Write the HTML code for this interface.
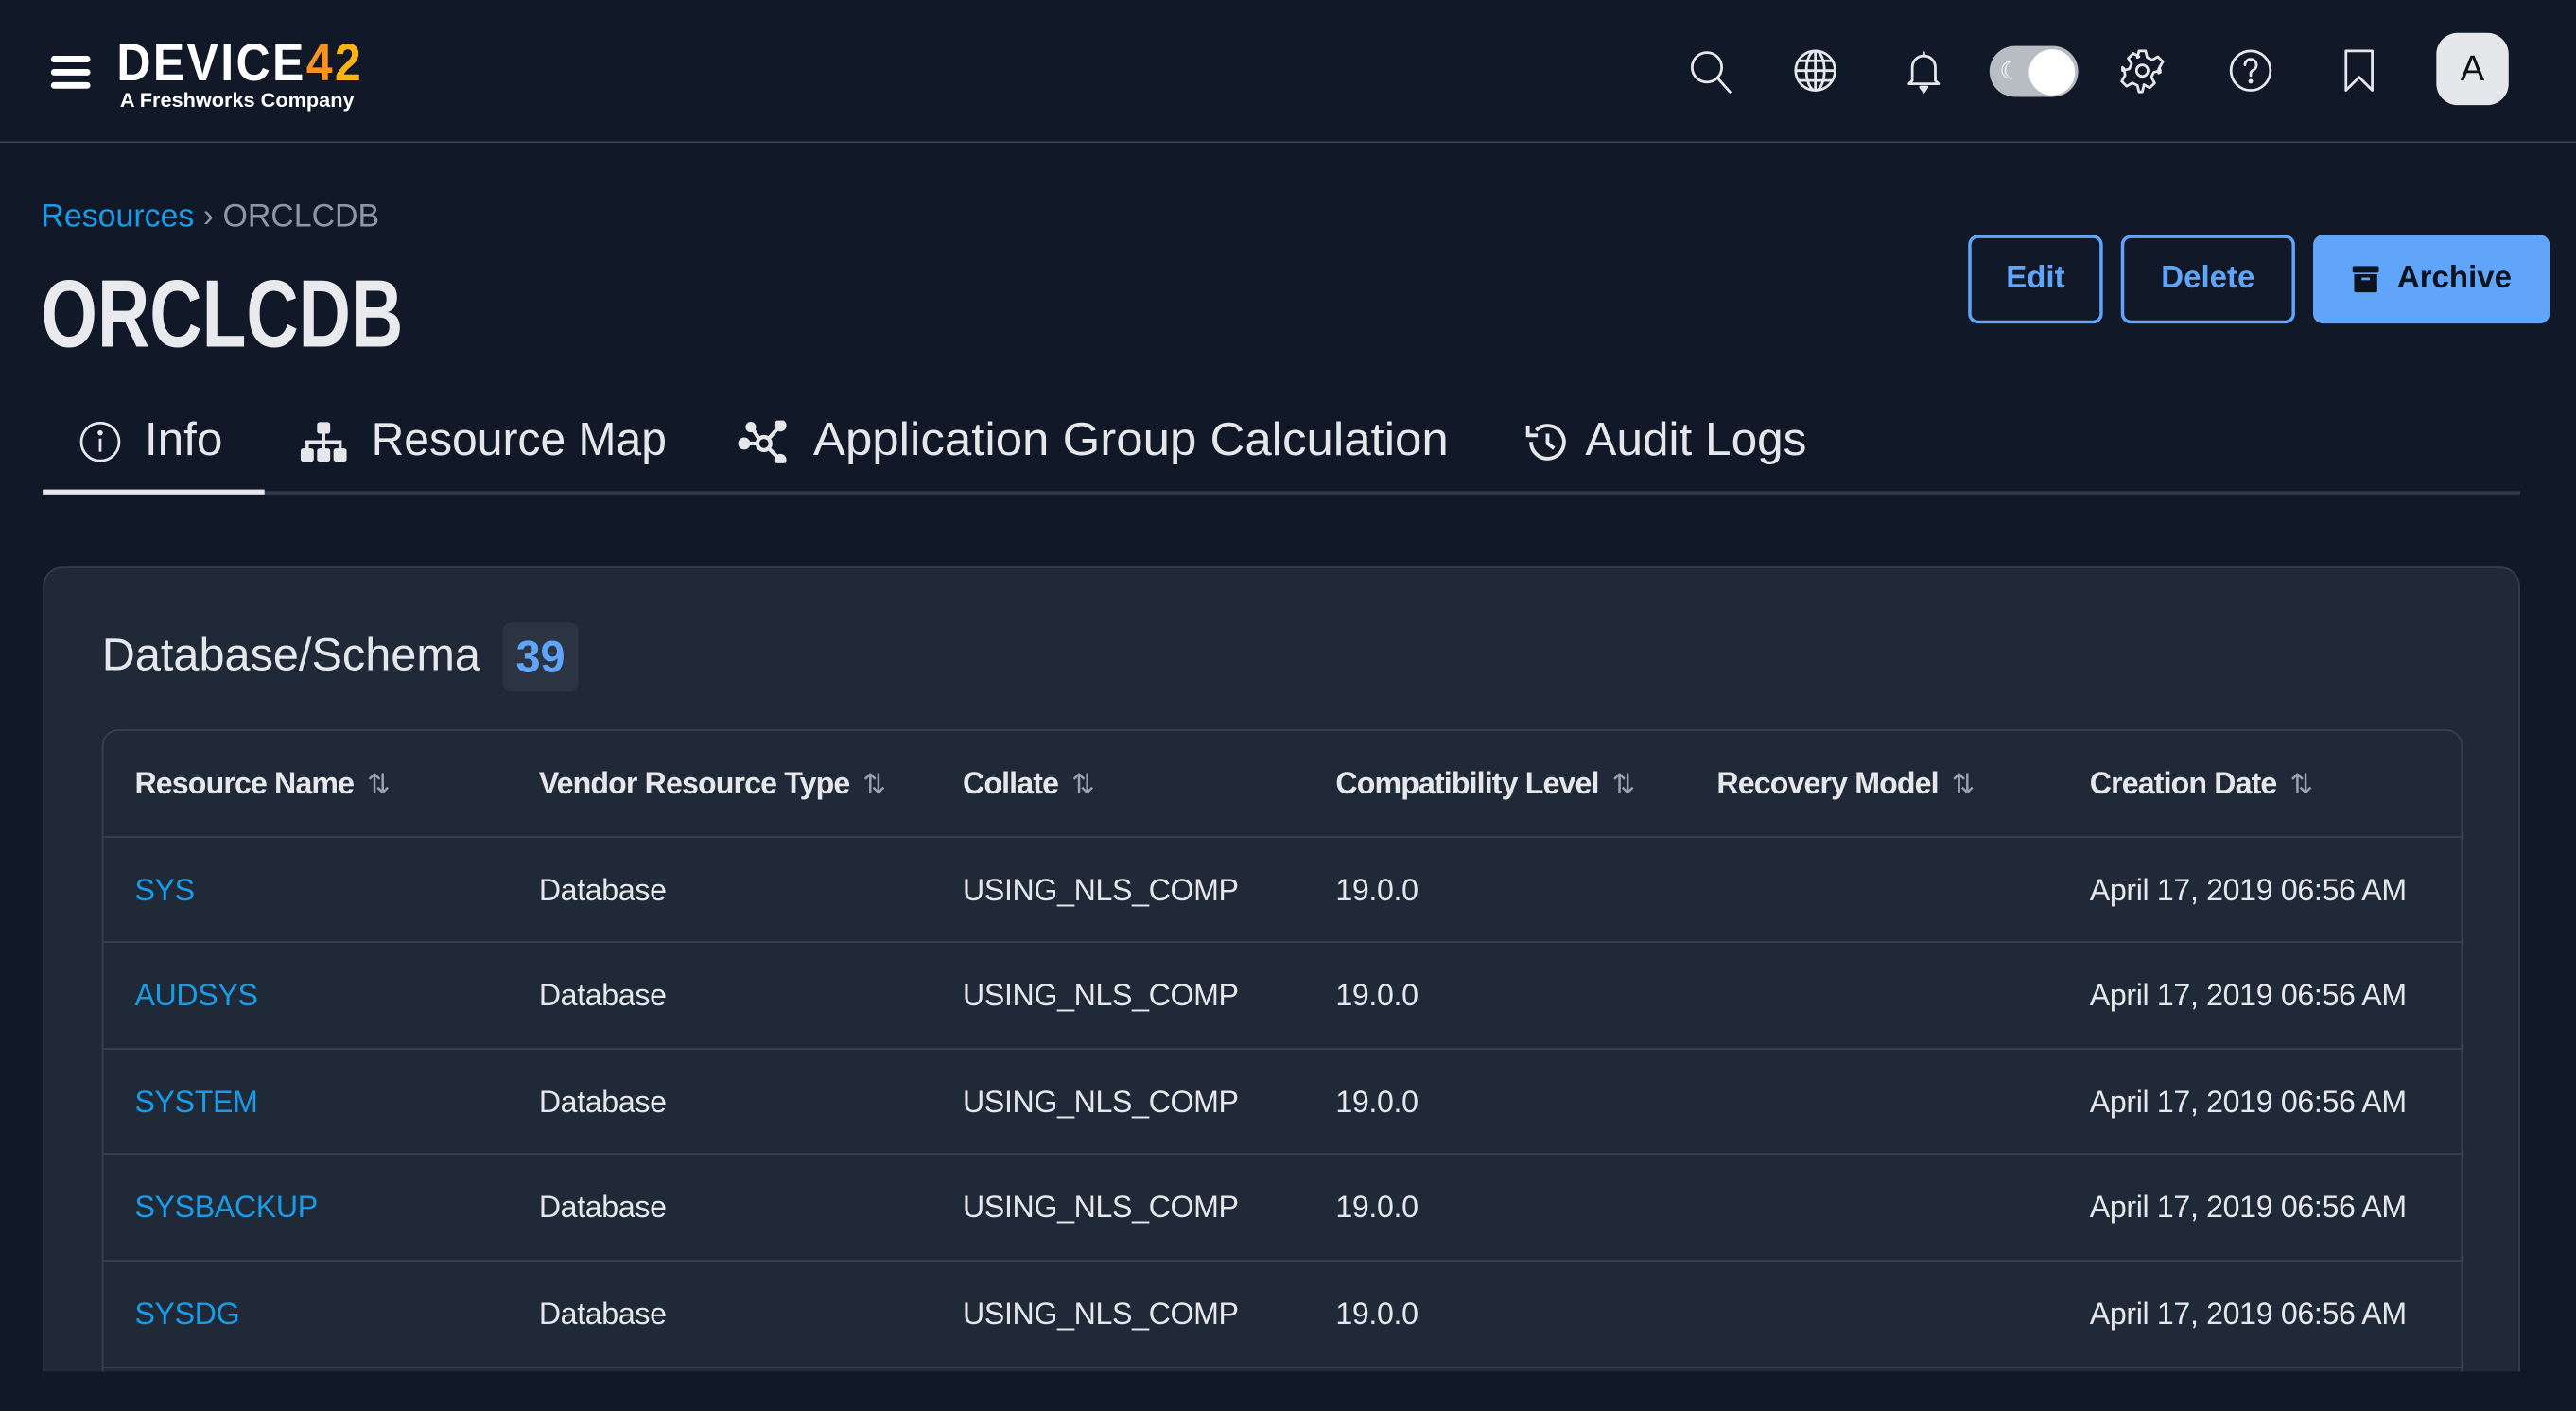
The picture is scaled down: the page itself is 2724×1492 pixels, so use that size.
<!DOCTYPE html>
<html><head><meta charset="utf-8"><style>
*{margin:0;padding:0;box-sizing:border-box}
html,body{width:2724px;height:1492px;overflow:hidden;background:#111827}
#w{position:absolute;left:0;top:0;width:1568px;height:859px;overflow:hidden;transform:scale(1.73724,1.73690);transform-origin:0 0;font-family:"Liberation Sans",sans-serif;color:#e5e7eb}
.a{position:absolute}
.hdr{left:0;top:0;width:1568px;height:87px;border-bottom:1px solid #3a4150}
.bar{position:absolute;left:31px;width:24px;height:3.5px;background:#fff;border-radius:2px}
.ic{position:absolute;top:29px;width:28px;height:28px}
.ic svg{width:28px;height:28px;fill:none;stroke:#e5e7eb;stroke-width:1.6;stroke-linecap:round;stroke-linejoin:round}
.btn{position:absolute;top:143px;height:54px;border:2px solid #60a5fa;border-radius:6px;color:#60a5fa;font-size:19px;font-weight:bold;display:flex;align-items:center;justify-content:center}
.tab{position:absolute;top:252px;font-size:28.5px;white-space:nowrap;display:flex;align-items:center;gap:14px}
.tab svg{fill:none;stroke:#e5e7eb;stroke-width:2}
.card{left:26px;top:345px;width:1508px;height:520px;background:#1f2937;border:1px solid #343d4b;border-radius:12px}
.tbl{left:62px;top:444px;width:1437px;height:420px;border:1px solid #374151;border-radius:10px;overflow:hidden}
.row{position:absolute;left:0;width:1437px;height:65px;border-top:1px solid #3a4352;font-size:18.5px}
.row span{position:absolute;top:50%;transform:translateY(-50%);white-space:nowrap;letter-spacing:-0.2px}
.hd span{font-weight:bold;letter-spacing:-0.5px}
.srt{color:#9ca3af;font-weight:normal;margin-left:8px;font-size:17px;font-style:normal}
.nm{color:#1a9be6}
</style></head><body><div id="w">
<div class="a hdr"></div>
<div class="bar" style="top:34px"></div><div class="bar" style="top:42px"></div><div class="bar" style="top:50px"></div>
<div class="a" style="left:71px;top:20px;font-size:32px;font-weight:bold;letter-spacing:1.5px;color:#fff;transform:scaleX(0.9);transform-origin:0 0">DEVICE<span style="color:#f7931e">4</span><span style="color:#fbb415">2</span></div>
<div class="a" style="left:73px;top:54px;font-size:12.5px;font-weight:bold;color:#fff">A Freshworks Company</div>

<div class="ic" style="left:1027px"><svg viewBox="0 0 28 28"><circle cx="12" cy="12" r="9"/><path d="M18.5 18.5L26 27"/></svg></div>
<div class="ic" style="left:1091px"><svg viewBox="0 0 28 28"><circle cx="14" cy="14" r="12"/><ellipse cx="14" cy="14" rx="5.5" ry="12"/><path d="M2 14h24M4 8h20M4 20h20M14 2v24"/></svg></div>
<div class="ic" style="left:1157px"><svg viewBox="0 0 28 28"><path d="M7 20V12a7 7 0 0 1 14 0v8l2 2H5z" /><path d="M14 3v2M12 24h4l-2 3z" fill="#e5e7eb"/></svg></div>
<div class="a" style="left:1211px;top:28px;width:54px;height:31px;border-radius:16px;background:#b8bcc3"></div>
<div class="a" style="left:1235px;top:30px;width:28px;height:28px;border-radius:50%;background:#fff"></div>
<div class="a" style="left:1217px;top:34px;font-size:15px;color:#fff">☾</div>
<div class="ic" style="left:1290px"><svg viewBox="0 0 28 28"><circle cx="14" cy="14" r="3.5"/><path d="M12 2h4l1 4 3 1.5 3.5-2 3 3-2 3.5L25 15l-1 .5v-2.5l1 1-4 1-1.5 3 2 3.5-3 3-3.5-2L15 23l-1 4h-2l-1-4-3-1.5-3.5 2-3-3 2-3.5L3 13l-1-1v2l4-1 1.5-3-2-3.5 3-3 3.5 2L11 6z"/></svg></div>
<div class="ic" style="left:1356px"><svg viewBox="0 0 28 28"><circle cx="14" cy="14" r="12"/><path d="M10.5 10.5a3.5 3.5 0 1 1 5 3.2c-1 .5-1.5 1.3-1.5 2.3v1"/><circle cx="14" cy="20.5" r=".6" fill="#e5e7eb"/></svg></div>
<div class="ic" style="left:1422px"><svg viewBox="0 0 28 28"><path d="M6 2h16v24l-8-8-8 8z"/></svg></div>
<div class="a" style="left:1483px;top:20px;width:44px;height:44px;border-radius:13px;background:#e5e7eb;color:#111;font-size:22px;display:flex;align-items:center;justify-content:center">A</div>

<div class="a" style="left:25px;top:121px;font-size:19.5px;color:#8b98a5"><span style="color:#1a9be6">Resources</span> › ORCLCDB</div>
<div class="a" style="left:25px;top:158px;font-size:58px;font-weight:bold;color:#e9eaee;transform:scaleX(0.76);transform-origin:0 0">ORCLCDB</div>

<div class="btn" style="left:1198px;width:82px">Edit</div>
<div class="btn" style="left:1291px;width:106px">Delete</div>
<div class="btn" style="left:1408px;width:144px;background:#60a5fa;color:#0b1220;gap:10px"><svg width="18" height="18" viewBox="0 0 18 18"><rect x="1" y="1" width="16" height="4" rx="1" fill="#0b1220"/><path d="M2 6h14v10a1 1 0 0 1-1 1H3a1 1 0 0 1-1-1z" fill="#0b1220"/><rect x="6.5" y="8" width="5" height="1.6" fill="#60a5fa"/></svg>Archive</div>

<div class="tab" style="left:48px"><svg width="26" height="26" viewBox="0 0 26 26" style="stroke-width:1.6"><circle cx="13" cy="13" r="11.5"/><path d="M13 11v8"/><circle cx="13" cy="7.5" r=".8" fill="#e5e7eb"/></svg><span>Info</span></div>
<div class="tab" style="left:182px"><svg width="30" height="26" viewBox="0 0 30 26" style="stroke:none;fill:#e5e7eb"><rect x="11" y="1" width="8" height="7" rx="1.5"/><rect x="14" y="8" width="2" height="5"/><rect x="4" y="12" width="22" height="2"/><rect x="4" y="12" width="2" height="6"/><rect x="14" y="12" width="2" height="6"/><rect x="24" y="12" width="2" height="6"/><rect x="1" y="17" width="8" height="8" rx="1.5"/><rect x="11" y="17" width="8" height="8" rx="1.5"/><rect x="21" y="17" width="8" height="8" rx="1.5"/></svg><span style="display:inline-block;transform:scaleX(.97);transform-origin:0 50%">Resource Map</span></div>
<div class="tab" style="left:449px"><svg width="32" height="26" viewBox="0 0 32 26" style="stroke-width:2.4"><circle cx="16" cy="14" r="4"/><path d="M5 14h7M19 11l6-7M19 17l6 6M13 11l-4-6"/><circle cx="4" cy="14" r="2.5" fill="#e5e7eb"/><circle cx="26" cy="3" r="2.5" fill="#e5e7eb"/><circle cx="26" cy="24" r="2.5" fill="#e5e7eb"/><circle cx="8" cy="4" r="2" fill="#e5e7eb"/></svg><span style="display:inline-block;transform:scaleX(1.03);transform-origin:0 50%">Application Group Calculation</span></div>
<div class="tab" style="left:927px;gap:10px"><svg width="28" height="26" viewBox="0 0 28 26" style="stroke-width:2.2"><path d="M5 13a10 10 0 1 0 3-7"/><path d="M3 3v6h6"/><path d="M15 8v6l4 3"/></svg><span>Audit Logs</span></div>
<div class="a" style="left:26px;top:299px;width:1508px;height:2px;background:#323b49"></div>
<div class="a" style="left:26px;top:298px;width:135px;height:3px;background:#e5e7eb"></div>

<div class="a card"></div>
<div class="a" style="left:62px;top:383px;font-size:28px;color:#e5e7eb">Database/Schema</div>
<div class="a" style="left:306px;top:379px;width:46px;height:42px;border-radius:5px;background:#2b3442;color:#60a5fa;font-size:27px;font-weight:bold;display:flex;align-items:center;justify-content:center">39</div>

<div class="a tbl">
<div class="row hd" style="top:0;border-top:none;height:64px"><span style="left:19px">Resource Name<i class="srt">⇅</i></span><span style="left:265px">Vendor Resource Type<i class="srt">⇅</i></span><span style="left:523px">Collate<i class="srt">⇅</i></span><span style="left:750px">Compatibility Level<i class="srt">⇅</i></span><span style="left:982px">Recovery Model<i class="srt">⇅</i></span><span style="left:1209px">Creation Date<i class="srt">⇅</i></span></div>
<div class="row" style="top:64px"><span class="nm" style="left:19px">SYS</span><span style="left:265px">Database</span><span style="left:523px">USING_NLS_COMP</span><span style="left:750px">19.0.0</span><span style="left:1209px">April 17, 2019 06:56 AM</span></div>
<div class="row" style="top:128px"><span class="nm" style="left:19px">AUDSYS</span><span style="left:265px">Database</span><span style="left:523px">USING_NLS_COMP</span><span style="left:750px">19.0.0</span><span style="left:1209px">April 17, 2019 06:56 AM</span></div>
<div class="row" style="top:193px"><span class="nm" style="left:19px">SYSTEM</span><span style="left:265px">Database</span><span style="left:523px">USING_NLS_COMP</span><span style="left:750px">19.0.0</span><span style="left:1209px">April 17, 2019 06:56 AM</span></div>
<div class="row" style="top:257px"><span class="nm" style="left:19px">SYSBACKUP</span><span style="left:265px">Database</span><span style="left:523px">USING_NLS_COMP</span><span style="left:750px">19.0.0</span><span style="left:1209px">April 17, 2019 06:56 AM</span></div>
<div class="row" style="top:322px"><span class="nm" style="left:19px">SYSDG</span><span style="left:265px">Database</span><span style="left:523px">USING_NLS_COMP</span><span style="left:750px">19.0.0</span><span style="left:1209px">April 17, 2019 06:56 AM</span></div>
<div class="row" style="top:387px"></div>
</div>
<div class="a" style="left:0;top:835px;width:1568px;height:30px;background:#111827;z-index:50"></div>
</div></body></html>
